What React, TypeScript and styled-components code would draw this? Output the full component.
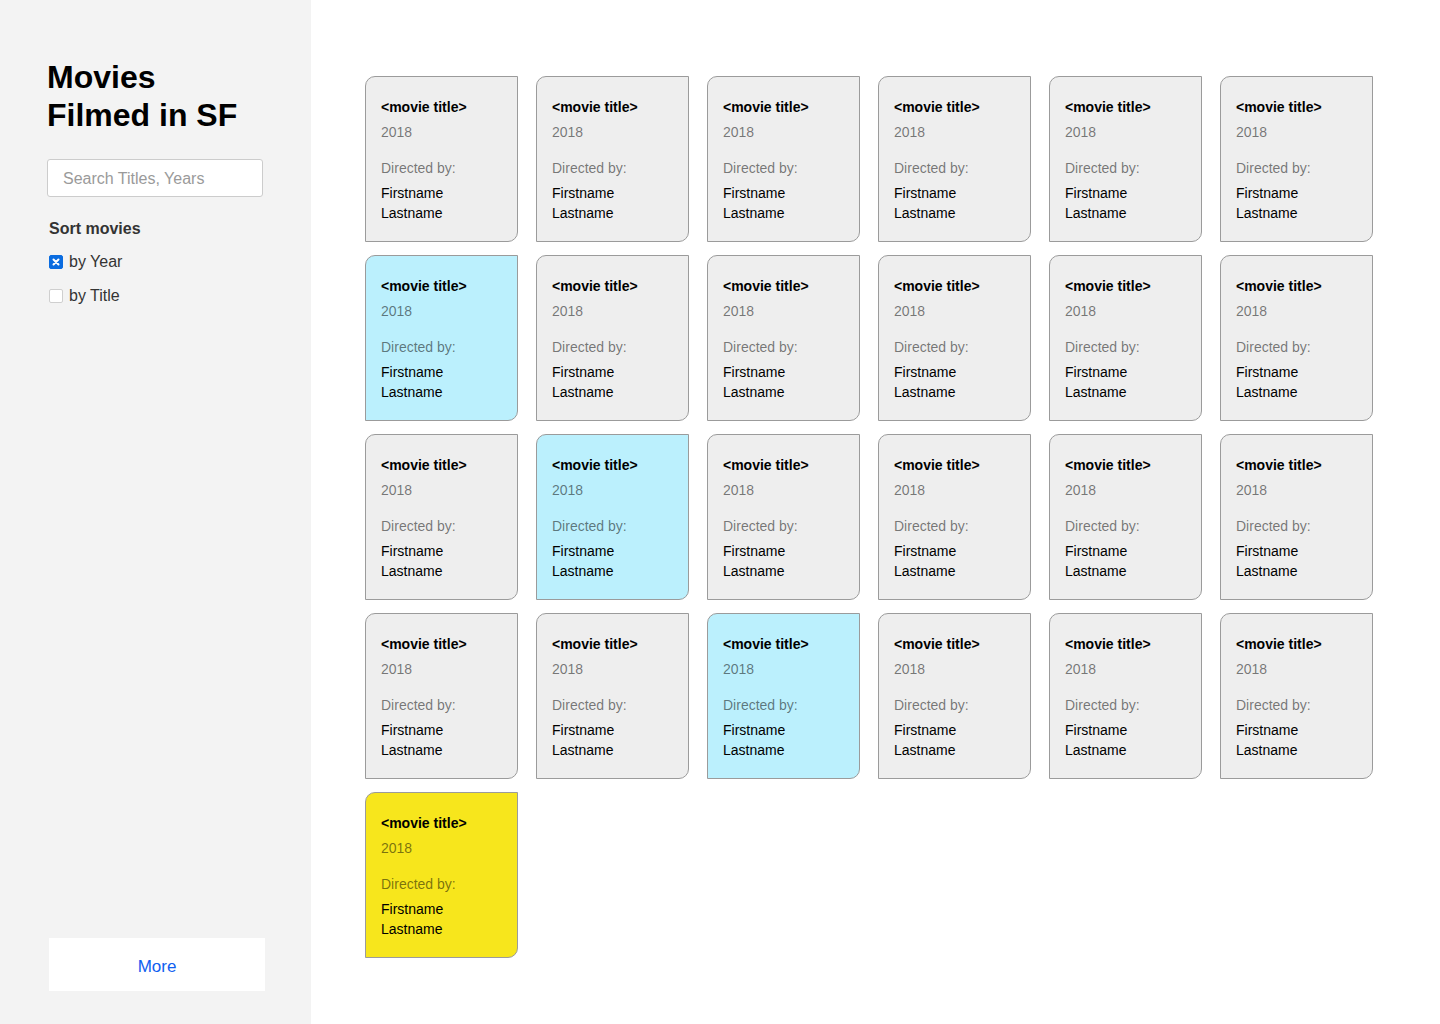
import React from "react";
import styled, { createGlobalStyle } from "styled-components";

const Global = createGlobalStyle`
  html, body { margin: 0; padding: 0; }
  body { font-family: "Liberation Sans", Arial, sans-serif; background: #fff; }
  * { box-sizing: border-box; }
`;

const Page = styled.div`
  display: flex;
  min-height: 1024px;
`;

const Sidebar = styled.aside`
  width: 311px;
  flex-shrink: 0;
  background: #f3f3f3;
  display: flex;
  flex-direction: column;
  padding: 58px 0 33px 47px;
`;

const Title = styled.h1`
  margin: 0 0 25px 0;
  font-size: 32px;
  line-height: 38px;
  font-weight: 700;
  color: #000;
`;

const Search = styled.input`
  width: 216px;
  height: 38px;
  border: 1px solid #cccccc;
  border-radius: 3px;
  background: #fff;
  padding: 1px 15px 0 15px;
  font-family: "Liberation Sans", Arial, sans-serif;
  font-size: 16px;
  color: #333;
  outline: none;
  &::placeholder { color: #9a9a9a; }
`;

const SortHeading = styled.div`
  margin: 22px 0 13px 2px;
  font-size: 16px;
  line-height: 20px;
  font-weight: 700;
  color: #333;
`;

const Option = styled.label`
  display: flex;
  align-items: center;
  gap: 6px;
  height: 20px;
  margin: 0 0 14px 2px;
  font-size: 16px;
  color: #333;
`;

const Box = styled.span<{ $checked?: boolean }>`
  width: 14px;
  height: 14px;
  border-radius: 2px;
  display: inline-flex;
  align-items: center;
  justify-content: center;
  background: ${(p) => (p.$checked ? "#0a6ce0" : "#fff")};
  border: 1px solid ${(p) => (p.$checked ? "#0a6ce0" : "#cfcfcf")};
`;

const MoreButton = styled.button`
  margin-top: auto;
  margin-left: 2px;
  width: 216px;
  height: 53px;
  border: none;
  background: #fff;
  padding: 4px 0 0 0;
  font-family: "Liberation Sans", Arial, sans-serif;
  font-size: 17px;
  color: #1060f0;
  cursor: pointer;
`;

const Main = styled.main`
  flex: 1;
  padding: 76px 0 40px 54px;
`;

const Grid = styled.div`
  display: grid;
  grid-template-columns: repeat(6, 153px);
  column-gap: 18px;
  row-gap: 13px;
`;

type Tone = "gray" | "blue" | "yellow";
const bg: Record<Tone, string> = { gray: "#eeeeee", blue: "#bbf0fd", yellow: "#f7e61c" };

const Card = styled.div<{ $tone: Tone }>`
  height: 166px;
  background: ${(p) => bg[p.$tone]};
  border: 1px solid #9b9b9b;
  border-radius: 10px 0 10px 0;
  padding: 22px 15px 0 15px;
`;

const CardTitle = styled.div`
  font-size: 14px;
  line-height: 17px;
  font-weight: 700;
  color: #000;
`;

const Year = styled.div`
  margin-top: 7px;
  font-size: 14px;
  line-height: 18px;
  color: rgba(0, 0, 0, 0.52);
`;

const DirectedLabel = styled.div`
  margin-top: 18px;
  font-size: 14px;
  line-height: 18px;
  color: rgba(0, 0, 0, 0.52);
`;

const Name = styled.div<{ $first?: boolean }>`
  margin-top: ${(p) => (p.$first ? "6px" : "0")};
  font-size: 14px;
  line-height: 20px;
  color: #000;
`;

const tones: Tone[] = Array.from({ length: 25 }, (_, i) => {
  if (i === 6 || i === 13 || i === 20) return "blue";
  if (i === 24) return "yellow";
  return "gray";
});

export default function App() {
  return (
    <>
      <Global />
      <Page>
        <Sidebar>
          <Title>
            Movies
            <br />
            Filmed in SF
          </Title>
          <Search placeholder="Search Titles, Years" />
          <SortHeading>Sort movies</SortHeading>
          <Option>
            <Box $checked>
              <svg width="8" height="8" viewBox="0 0 8 8">
                <path d="M1.5 1.5 L6.5 6.5 M6.5 1.5 L1.5 6.5" stroke="#fff" strokeWidth="2" strokeLinecap="round" />
              </svg>
            </Box>
            by Year
          </Option>
          <Option>
            <Box />
            by Title
          </Option>
          <MoreButton>More</MoreButton>
        </Sidebar>
        <Main>
          <Grid>
            {tones.map((t, i) => (
              <Card key={i} $tone={t}>
                <CardTitle>&lt;movie title&gt;</CardTitle>
                <Year>2018</Year>
                <DirectedLabel>Directed by:</DirectedLabel>
                <Name $first>Firstname</Name>
                <Name>Lastname</Name>
              </Card>
            ))}
          </Grid>
        </Main>
      </Page>
    </>
  );
}
